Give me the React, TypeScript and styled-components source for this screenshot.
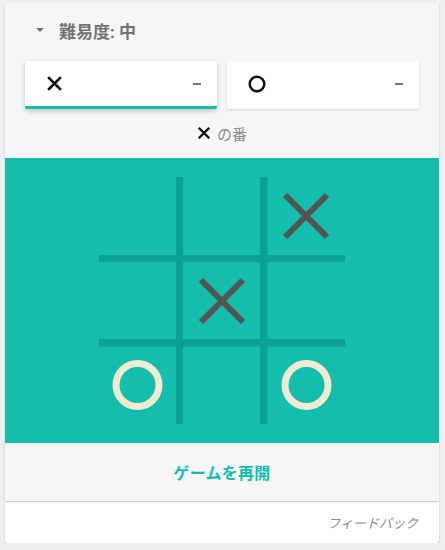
import styled, { createGlobalStyle } from "styled-components";

const GlobalStyle = createGlobalStyle`
  body {
    margin: 0;
    background: #efefef;
    font-family: Roboto, "Noto Sans CJK JP", "Liberation Sans", sans-serif;
  }
`;

const Page = styled.div`
  padding: 3px 6px 0 5px;
`;

const Card = styled.div`
  background: #f6f6f6;
  box-shadow: 0 1px 2px rgba(0, 0, 0, 0.18);
  border-radius: 2px 2px 0 0;
  position: relative;
  z-index: 1;
`;

const Header = styled.div`
  display: flex;
  align-items: center;
  height: 54px;
  padding-left: 31px;
  gap: 15px;
`;

const Caret = styled.span`
  width: 0;
  height: 0;
  border-left: 4px solid transparent;
  border-right: 4px solid transparent;
  border-top: 4px solid #737373;
`;

const Title = styled.h2`
  margin: 0;
  font-size: 17px;
  font-weight: 700;
  color: #727272;
`;

const Players = styled.div`
  display: flex;
  gap: 10px;
  padding: 4px 20px 0;
`;

const PlayerCard = styled.div<{ $active?: boolean }>`
  flex: 1;
  height: 48px;
  box-sizing: border-box;
  background: #fff;
  border-radius: 2px;
  display: flex;
  align-items: center;
  justify-content: space-between;
  padding: 0 16px 0 21px;
  border-bottom: 3px solid ${(p) => (p.$active ? "#14bdac" : "transparent")};
  box-shadow: ${(p) =>
    p.$active
      ? "0 2px 5px rgba(0,0,0,0.22)"
      : "0 1px 2px rgba(0,0,0,0.14)"};
`;

const Score = styled.span`
  width: 8px;
  height: 2px;
  background: #757575;
`;

const Turn = styled.div`
  display: flex;
  justify-content: center;
  align-items: center;
  gap: 6px;
  height: 48px;
  padding-bottom: 1px;
  font-size: 15px;
  color: #8a8a8a;
`;

const Board = styled.div`
  background: #14bdac;
  height: 285px;
  display: flex;
  align-items: center;
  justify-content: center;
`;

const Restart = styled.button`
  display: block;
  width: 100%;
  height: 58px;
  border: none;
  background: transparent;
  font-family: inherit;
  font-size: 16px;
  font-weight: 700;
  color: #14bdac;
  letter-spacing: 0.3px;
  padding: 0 0 1px;
`;

const Footer = styled.div`
  background: #fff;
  height: 41px;
  margin-top: 1px;
  border-radius: 0 0 3px 3px;
  box-shadow: 0 1px 2px rgba(0, 0, 0, 0.2);
  display: flex;
  align-items: center;
  justify-content: flex-end;
  padding-right: 21px;
`;

const Feedback = styled.span`
  font-size: 13px;
  font-style: italic;
  color: #8c8c8c;
`;

const XIcon = ({ size, stroke }: { size: number; stroke: number }) => (
  <svg width={size} height={size} viewBox="0 0 16 16">
    <path d="M2 2 L14 14 M14 2 L2 14" stroke="#111" strokeWidth={stroke} />
  </svg>
);

const OIcon = () => (
  <svg width={18} height={18} viewBox="0 0 18 18">
    <circle cx="9" cy="9" r="7.3" fill="none" stroke="#111" strokeWidth="2.5" />
  </svg>
);

const TEAL_LINE = "#0ca192";
const MARK_X = "#545454";
const MARK_O = "#f2ebd3";

const Cross = ({ cx, cy }: { cx: number; cy: number }) => (
  <path
    d={`M${cx - 21} ${cy - 21} L${cx + 21} ${cy + 21} M${cx + 21} ${cy - 21} L${cx - 21} ${cy + 21}`}
    stroke={MARK_X}
    strokeWidth={6}
  />
);

const Nought = ({ cx, cy }: { cx: number; cy: number }) => (
  <circle cx={cx} cy={cy} r={21.5} fill="none" stroke={MARK_O} strokeWidth={7} />
);

export default function App() {
  return (
    <Page>
      <GlobalStyle />
      <Card>
        <Header>
          <Caret />
          <Title>難易度: 中</Title>
        </Header>
        <Players>
          <PlayerCard $active>
            <XIcon size={17} stroke={2.6} />
            <Score />
          </PlayerCard>
          <PlayerCard>
            <OIcon />
            <Score />
          </PlayerCard>
        </Players>
        <Turn>
          <XIcon size={14} stroke={2.8} />
          <span>の番</span>
        </Turn>
        <Board>
          <svg width={246} height={247} viewBox="0 0 246 247">
            <rect x={77} y={0} width={7} height={247} fill={TEAL_LINE} />
            <rect x={161} y={0} width={7.5} height={247} fill={TEAL_LINE} />
            <rect x={0} y={78} width={246} height={7} fill={TEAL_LINE} />
            <rect x={0} y={162} width={246} height={7.5} fill={TEAL_LINE} />
            <Cross cx={207} cy={39} />
            <Cross cx={123} cy={124} />
            <Nought cx={38.5} cy={208} />
            <Nought cx={207.5} cy={208} />
          </svg>
        </Board>
        <Restart>ゲームを再開</Restart>
      </Card>
      <Footer>
        <Feedback>フィードバック</Feedback>
      </Footer>
    </Page>
  );
}
